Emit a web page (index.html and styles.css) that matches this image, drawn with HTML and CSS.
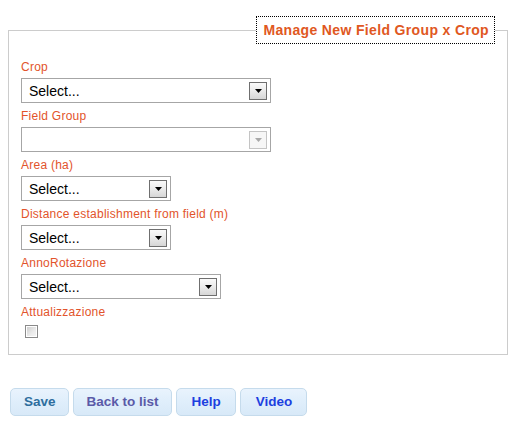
FILE: index.html
```html
<!DOCTYPE html>
<html lang="en">
<head>
<meta charset="utf-8">
<title>Manage New Field Group x Crop</title>
<link rel="stylesheet" href="styles.css">
</head>
<body>
<form class="page">
  <fieldset class="panel">
    <legend class="panel-title">Manage New Field Group x Crop</legend>

    <div class="field">
      <label class="field-label">Crop</label>
      <div class="select select-lg">
        <span class="select-text">Select...</span>
        <span class="select-btn"><svg width="7" height="4" viewBox="0 0 7 4"><path d="M0 0h7L3.5 4z"/></svg></span>
      </div>
    </div>

    <div class="field">
      <label class="field-label">Field Group</label>
      <div class="select select-lg select-disabled">
        <span class="select-text"></span>
        <span class="select-btn"><svg width="7" height="4" viewBox="0 0 7 4"><path d="M0 0h7L3.5 4z"/></svg></span>
      </div>
    </div>

    <div class="field">
      <label class="field-label">Area (ha)</label>
      <div class="select select-sm">
        <span class="select-text">Select...</span>
        <span class="select-btn"><svg width="7" height="4" viewBox="0 0 7 4"><path d="M0 0h7L3.5 4z"/></svg></span>
      </div>
    </div>

    <div class="field">
      <label class="field-label">Distance establishment from field (m)</label>
      <div class="select select-sm">
        <span class="select-text">Select...</span>
        <span class="select-btn"><svg width="7" height="4" viewBox="0 0 7 4"><path d="M0 0h7L3.5 4z"/></svg></span>
      </div>
    </div>

    <div class="field">
      <label class="field-label">AnnoRotazione</label>
      <div class="select select-md">
        <span class="select-text">Select...</span>
        <span class="select-btn"><svg width="7" height="4" viewBox="0 0 7 4"><path d="M0 0h7L3.5 4z"/></svg></span>
      </div>
    </div>

    <div class="field field-last">
      <label class="field-label">Attualizzazione</label>
      <input type="checkbox" class="check">
    </div>
  </fieldset>

  <div class="actions">
    <button type="button" class="btn btn-save">Save</button>
    <button type="button" class="btn btn-visited">Back to list</button>
    <button type="button" class="btn btn-link">Help</button>
    <button type="button" class="btn btn-link">Video</button>
  </div>
</form>
</body>
</html>
```

FILE: styles.css
```css
html, body {
  margin: 0;
  padding: 0;
  background: #ffffff;
}

.page {
  padding: 16px 8px 0 8px;
  font-family: "Liberation Sans", Arial, sans-serif;
}

.panel {
  box-sizing: border-box;
  width: 500px;
  margin: 0;
  padding: 16px 12px 16px 12px;
  border: 1px solid #cccccc;
  min-width: 0;
}

.panel-title {
  margin-left: auto;
  margin-right: 0;
  padding: 5px 5px 5px 6px;
  border: 1px dotted #000000;
  font-size: 14px;
  line-height: 16px;
  font-weight: bold;
  letter-spacing: 0.35px;
  color: #e0581f;
}

.field {
  display: flex;
  flex-direction: column;
  align-items: flex-start;
  margin-bottom: 6px;
}

.field-last {
  margin-bottom: 0;
}

.field-label {
  display: block;
  font-size: 12px;
  line-height: 14px;
  height: 14px;
  margin-bottom: 4px;
  letter-spacing: 0.25px;
  color: #e2542b;
}

.select {
  box-sizing: border-box;
  height: 25px;
  border: 1px solid #a6a6a6;
  background: #ffffff;
  display: flex;
  align-items: center;
  justify-content: space-between;
  padding: 0 3px 0 7px;
}

.select-lg { width: 250px; }
.select-md { width: 200px; }
.select-sm { width: 150px; }

.select-text {
  font-size: 14px;
  line-height: 16px;
  color: #000000;
}

.select-btn {
  box-sizing: border-box;
  width: 18px;
  height: 18px;
  border: 1px solid #6f6f6f;
  background: linear-gradient(#fafafa 0%, #ececec 45%, #d6d6d6 100%);
  display: flex;
  align-items: center;
  justify-content: center;
}

.select-btn svg {
  display: block;
  fill: #000000;
}

.select-disabled .select-btn {
  border-color: #c4c4c4;
  background: #f6f6f6;
}

.select-disabled .select-btn svg {
  fill: #a8a8a8;
}

.check {
  -webkit-appearance: none;
  appearance: none;
  box-sizing: border-box;
  width: 13px;
  height: 13px;
  margin: 2px 0 0 4px;
  border: 1px solid #8a8a8a;
  box-shadow: inset 0 0 0 1px #ffffff;
  background: linear-gradient(135deg, #c9c9c9 0%, #ececec 60%, #f6f6f6 100%);
}

.actions {
  display: flex;
  gap: 4px;
  margin-top: 33px;
  padding-left: 2px;
}

.btn {
  box-sizing: border-box;
  height: 28px;
  padding: 0 12px 0 13px;
  border: 1px solid #c5dbec;
  border-radius: 5px;
  background: linear-gradient(#e9f3fd 0%, #dfeefb 50%, #d8e9f8 100%);
  font-family: "Liberation Sans", Arial, sans-serif;
  font-size: 13.5px;
  font-weight: bold;
  line-height: 16px;
  cursor: pointer;
}

.btn-save { color: #2e6e9e; }
.btn-visited { color: #5a5aa8; }
.btn-link {
  color: #1c3fe0;
  padding: 0 14px 0 15px;
}
```
